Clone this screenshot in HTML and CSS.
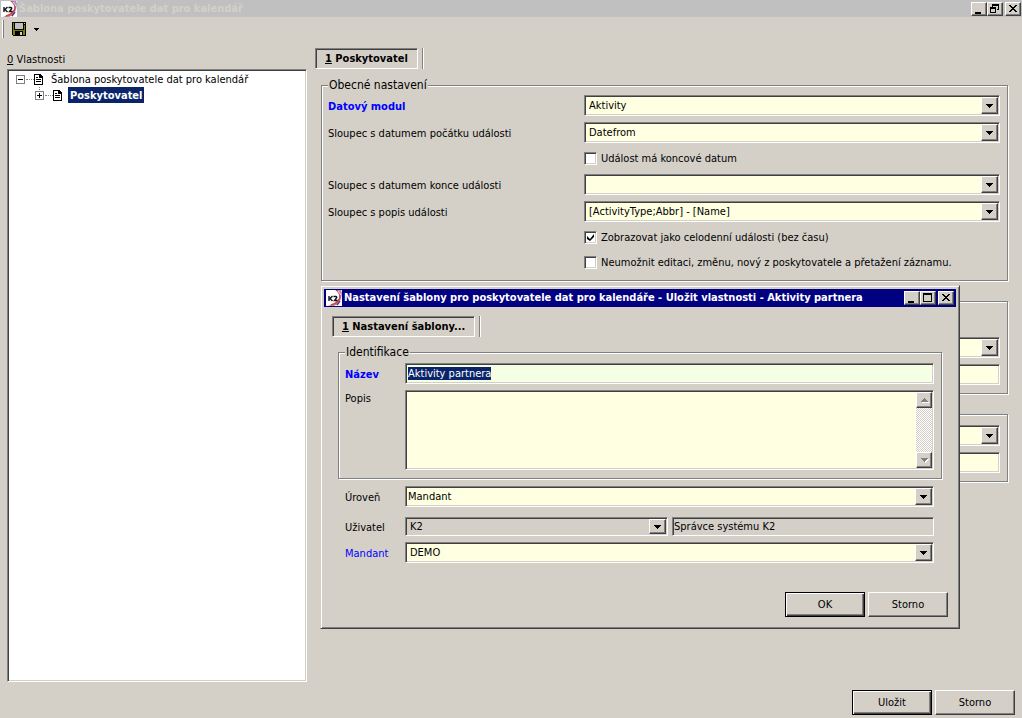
FILE: index.html
```html
<!DOCTYPE html>
<html lang="cs">
<head>
<meta charset="utf-8">
<title>Šablona poskytovatele dat pro kalendář</title>
<link rel="stylesheet" href="styles.css">
</head>
<body>
<svg class="defs" aria-hidden="true">
  <symbol id="logo" viewBox="0 0 16 16">
    <rect width="16" height="16" fill="#fff"/>
    <path d="M9 0h6l1 3-1 6-3 5-4 2H2l4-2c5-1 8-5 7-9-1-2-2-4-4-5z" fill="#b98ab8"/>
    <path d="M10 0c4 2 5 6 3 10" fill="none" stroke="#c02a3a" stroke-width="1"/>
    <path d="M13 9c-1 3-4 5-8 6" fill="none" stroke="#d8472f" stroke-width="1.500"/>
    <path d="M14 11l-3 4" fill="none" stroke="#5a3c86" stroke-width="1.500"/>
    <path d="M12 1l3 4" fill="none" stroke="#e8e0f0" stroke-width="1"/>
    <path d="M3 6v5M6.500 6L4 8.500 6.500 11M7.500 6.500h2.500c1 0 1 1.500 0 2L8.500 10.500h3" fill="none" stroke="#101018" stroke-width="1.400"/>
  </symbol>
  <symbol id="down" viewBox="0 0 7 4"><path d="M0 0h7v1H6v1H5v1H4v1H3V3H2V2H1V1H0z" fill="currentColor"/></symbol>
  <symbol id="up" viewBox="0 0 7 4"><path d="M3 0h1v1h1v1h1v1h1v1H0V3h1V2h1V1h1z" fill="currentColor"/></symbol>
  <symbol id="min" viewBox="0 0 12 10"><path d="M2 8h6v2H2z"/></symbol>
  <symbol id="max" viewBox="0 0 12 10"><path d="M1 0h9v9H1zM2 2v6h7V2z" fill-rule="evenodd"/></symbol>
  <symbol id="restore" viewBox="0 0 12 10"><path d="M3 0h7v6H8V5h1V2H4v1H3zM1 3h6v6H1zM2 5v3h4V5z" fill-rule="evenodd"/></symbol>
  <symbol id="close" viewBox="0 0 12 10"><path d="M2 1h2v1h1v1h2V2h1V1h2v1H9v1H8v1H7v1h1v1h1v1h1v1H8V7H7V6H5v1H4v1H2V7h1V6h1V5h1V4H4V3H3V2H2z"/></symbol>
  <symbol id="doc" viewBox="0 0 9 11"><path d="M0 0h6l3 3v8H0zM1 1v9h7V4H5V1z" fill-rule="evenodd"/><path d="M2 3h2v1H2zM2 5h5v1H2zM2 7h5v1H2z"/></symbol>
</svg>

<div class="window">
  <header class="titlebar">
    <svg class="logo"><use href="#logo"/></svg>
    <h1 class="title">Šablona poskytovatele dat pro kalendář</h1>
    <div class="winbtns">
      <button class="winbtn" aria-label="Minimalizovat"><svg><use href="#min"/></svg></button>
      <button class="winbtn" aria-label="Obnovit"><svg><use href="#restore"/></svg></button>
      <button class="winbtn winbtn-close" aria-label="Zavřít"><svg><use href="#close"/></svg></button>
    </div>
  </header>

  <div class="toolbar">
    <span class="grip"></span>
    <button class="tool" aria-label="Uložit šablonu">
      <svg class="disk" viewBox="0 0 14 14"><path d="M0 0h14v14H1L0 13z"/><path d="M1 1h1v7h10V3h1v10h-2V9H3v4H1z" fill="#808000"/><path d="M3 1h8v6H3z" fill="#c0c0c0"/><path d="M12 1h1v1h-1zM8 10h2v3H8z" fill="#d4d0c8"/></svg>
    </button>
    <button class="tool" aria-label="Možnosti uložení"><svg class="tool-arrow" viewBox="0 0 5 3"><path d="M0 0h5v1H4v1H3v1H2V2H1V1H0z"/></svg></button>
  </div>

  <main class="main">
    <section class="side">
      <h2 class="side-title"><u>0</u> Vlastnosti</h2>
      <ul class="tree">
        <li>
          <div class="node"><svg class="expander" viewBox="0 0 9 9"><path d="M0 0h9v9H0zM1 1v7h7V1z" fill="#808080" fill-rule="evenodd"/><path d="M2 4h5v1H2z"/></svg><span class="dots"></span><svg class="doc"><use href="#doc"/></svg><span class="node-text">Šablona poskytovatele dat pro kalendář</span></div>
          <ul class="subtree">
            <li>
              <div class="node"><svg class="expander branch" viewBox="0 0 9 16"><path d="M0 4h9v9H0zM1 5v7h7V5zM4 0h1v1H4zM4 2h1v1H4z" fill="#808080" fill-rule="evenodd"/><path d="M2 8h5v1H2zM4 6h1v5H4z"/></svg><span class="dots"></span><svg class="doc"><use href="#doc"/></svg><span class="node-text selected">Poskytovatel</span></div>
            </li>
          </ul>
        </li>
      </ul>
    </section>

    <section class="content">
      <div class="tabs"><button class="tab"><u>1</u> Poskytovatel</button><span class="tab-end"></span></div>

      <fieldset class="group">
        <legend>Obecné nastavení</legend>
        <div class="rows">
          <div class="row"><label class="required" for="module">Datový modul</label><div class="combo"><select id="module"><option>Aktivity</option></select><span class="drop"><svg><use href="#down"/></svg></span></div></div>
          <div class="row"><label for="start">Sloupec s datumem počátku události</label><div class="combo"><select id="start"><option>Datefrom</option></select><span class="drop"><svg><use href="#down"/></svg></span></div></div>
          <div class="row check-row"><label class="check"><input type="checkbox">Událost má koncové datum</label></div>
          <div class="row"><label for="end">Sloupec s datumem konce události</label><div class="combo"><select id="end"><option></option></select><span class="drop"><svg><use href="#down"/></svg></span></div></div>
          <div class="row"><label for="desc">Sloupec s popis události</label><div class="combo"><select id="desc"><option>[ActivityType;Abbr] - [Name]</option></select><span class="drop"><svg><use href="#down"/></svg></span></div></div>
          <div class="row check-row"><label class="check"><input type="checkbox" checked>Zobrazovat jako celodenní události (bez času)</label></div>
          <div class="row check-row"><label class="check"><input type="checkbox">Neumožnit editaci, změnu, nový z poskytovatele a přetažení záznamu.</label></div>
        </div>
      </fieldset>

      <div class="group plain tall">
        <div class="rows">
          <div class="row"><div class="combo"><select aria-label="Sloupec"><option></option></select><span class="drop"><svg><use href="#down"/></svg></span></div></div>
          <div class="row"><input class="field" aria-label="Hodnota"></div>
        </div>
      </div>
      <div class="group plain">
        <div class="rows">
          <div class="row"><div class="combo"><select aria-label="Sloupec"><option></option></select><span class="drop"><svg><use href="#down"/></svg></span></div></div>
          <div class="row"><input class="field" aria-label="Hodnota"></div>
        </div>
      </div>
    </section>
  </main>

  <footer class="actions"><button class="btn default">Uložit</button><button class="btn">Storno</button></footer>
</div>

<div class="dialog" role="dialog" aria-labelledby="dialog-title">
  <header class="titlebar active">
    <svg class="logo"><use href="#logo"/></svg>
    <h2 class="title" id="dialog-title">Nastavení šablony pro poskytovatele dat pro kalendáře - Uložit vlastnosti - Aktivity partnera</h2>
    <div class="winbtns">
      <button class="winbtn" aria-label="Minimalizovat"><svg><use href="#min"/></svg></button>
      <button class="winbtn" aria-label="Maximalizovat"><svg><use href="#max"/></svg></button>
      <button class="winbtn winbtn-close" aria-label="Zavřít"><svg><use href="#close"/></svg></button>
    </div>
  </header>
  <div class="dialog-body">
    <div class="tabs"><button class="tab"><u>1</u> Nastavení šablony...</button><span class="tab-end"></span></div>
    <fieldset class="group">
      <legend>Identifikace</legend>
      <div class="rows">
        <div class="row"><label class="required" for="name">Název</label><input class="field focused" id="name" value="Aktivity partnera"></div>
        <div class="row memo-row"><label for="note">Popis</label>
          <div class="memo"><textarea id="note"></textarea>
            <div class="scroll"><button disabled aria-label="Nahoru"><svg><use href="#up"/></svg></button><button disabled aria-label="Dolů"><svg><use href="#down"/></svg></button></div>
          </div>
        </div>
      </div>
    </fieldset>
    <div class="dialog-rows">
      <div class="row"><label for="level">Úroveň</label><div class="combo tight"><select id="level"><option>Mandant</option></select><span class="drop"><svg><use href="#down"/></svg></span></div></div>
      <div class="row user-row"><label for="user">Uživatel</label>
        <div class="pair"><div class="combo readonly"><select id="user"><option>K2</option></select><span class="drop"><svg><use href="#down"/></svg></span></div><input class="field readonly" value="Správce systému K2" aria-label="Jméno uživatele" readonly></div>
      </div>
      <div class="row"><label class="link" for="client">Mandant</label><div class="combo"><select id="client"><option>DEMO</option></select><span class="drop"><svg><use href="#down"/></svg></span></div></div>
    </div>
  </div>
  <footer class="actions"><button class="btn default">OK</button><button class="btn">Storno</button></footer>
</div>
<script src="app.js"></script>
</body>
</html>
```
FILE: styles.css
```css
:root {
  --face: #d4d0c8;
  --shadow: #808080;
  --dark: #404040;
  --light: #fff;
  --field: #ffffe1;
  --navy: #0a246a;
}

* { box-sizing: border-box; }

body {
  margin: 0;
  background: var(--face);
  color: #000;
  font: 11px/14px "DejaVu Sans Condensed", "DejaVu Sans", sans-serif;
}

button, input, select, textarea { font: inherit; color: inherit; border-radius: 0; }
svg { display: block; flex: none; shape-rendering: crispEdges; }
h1, h2, ul, fieldset { margin: 0; padding: 0; }
ul { list-style: none; }
.defs { position: absolute; width: 0; height: 0; }

.window { min-height: 100vh; display: flex; flex-direction: column; }

/* title bars */
.titlebar {
  display: flex;
  align-items: center;
  gap: 2px;
  height: 17px;
  padding: 0 1px;
  background: #c0c0c0;
  color: var(--face);
}
.titlebar.active { height: 18px; padding: 0 2px; background: #000080; color: #fff; }
.logo { width: 16px; height: 16px; shape-rendering: auto; }
.title { flex: 1; font-size: 11px; line-height: 14px; font-weight: bold; white-space: nowrap; overflow: hidden; }
.winbtns { display: flex; }
.winbtn {
  width: 16px;
  height: 14px;
  padding: 1px;
  border: 1px solid;
  border-color: var(--light) var(--dark) var(--dark) var(--light);
  box-shadow: inset -1px -1px var(--shadow);
  background: var(--face);
}
.winbtn svg { width: 12px; height: 10px; }
.winbtn-close { margin-left: 2px; }

/* toolbar */
.toolbar { display: flex; align-items: center; height: 24px; padding: 0 2px; }
.grip { width: 2px; height: 18px; border-right: 1px solid var(--shadow); border-left: 1px solid var(--light); }
.tool { border: 0; padding: 0 0 0 8px; background: none; }
.disk { width: 14px; height: 14px; }
.tool-arrow { width: 5px; height: 3px; }

/* main area */
.main { flex: 1; display: grid; grid-template-columns: 300px minmax(0, 1fr); gap: 8px; padding: 7px 7px 8px; }
.side { display: flex; flex-direction: column; padding-top: 5px; }
.side-title { font-size: 11px; line-height: 14px; font-weight: normal; margin-bottom: 2px; }
.tree {
  flex: 1;
  padding: 1px 0 0 8px;
  background: #fff;
  border: 1px solid;
  border-color: var(--shadow) var(--light) var(--light) var(--shadow);
  box-shadow: inset 1px 1px var(--dark), inset -1px -1px var(--face);
}
.subtree { padding-left: 19px; }
.node { display: flex; align-items: center; height: 16px; white-space: nowrap; }
.expander { width: 9px; height: 9px; }
.branch { height: 16px; }
.dots { width: 8px; margin-left: 1px; border-top: 1px dotted var(--shadow); }
.doc { width: 9px; height: 11px; }
.node-text { margin-left: 6px; padding: 1px 2px 0; line-height: 15px; }
.selected { background: var(--navy); color: #fff; font-weight: bold; }

/* tabs */
.tabs { display: flex; gap: 4px; height: 21px; }
.tab {
  padding: 1px 9px 0;
  border: 1px solid;
  border-color: var(--shadow) var(--light) var(--light) var(--shadow);
  box-shadow: inset 1px 1px var(--dark);
  background: var(--face);
  font-weight: bold;
  white-space: nowrap;
}
.tab-end { width: 2px; border-left: 1px solid var(--shadow); border-right: 1px solid var(--light); }

/* groups */
.content .group { margin: 9px 7px 0 6px; }
.group {
  min-width: 0;
  padding: 3px 7px 8px 6px;
  border: 1px solid var(--shadow);
  box-shadow: 1px 1px var(--light), inset 1px 1px var(--light);
}
.group legend { padding: 1px 1px 0; background: var(--face); font-size: 12px; line-height: 13px; }
.content .plain { margin-top: 20px; padding-top: 10px; }
.content .tall { padding-top: 35px; }
.rows { display: grid; gap: 6px; }
.row { display: grid; grid-template-columns: 256px minmax(0, 1fr); align-items: center; height: 21px; }
.row > label { white-space: nowrap; padding-top: 2px; }
.row > :only-child { grid-column: 2; }
.check-row { height: 19px; }
.required { color: #00f; font-weight: bold; }
.link { color: #00f; }

/* fields */
.combo, .field, .memo {
  width: 100%;
  min-width: 0;
  height: 21px;
  padding: 1px;
  border: 1px solid;
  border-color: var(--shadow) var(--light) var(--light) var(--shadow);
  box-shadow: inset 1px 1px var(--dark), inset -1px -1px var(--face);
  background: var(--field);
}
.field { outline: 0; }
.focused { padding-left: 2px; background: #f4ffe3; }
.focused::selection { background: var(--navy); color: #fff; }
.combo { display: flex; }
.combo select { flex: 1; min-width: 0; appearance: none; border: 0; padding: 0 3px; background: none; outline: 0; }
.tight select { padding: 0 1px; }
.drop {
  flex: none;
  width: 17px;
  display: grid;
  place-items: center;
  border: 1px solid;
  border-color: var(--light) var(--dark) var(--dark) var(--light);
  box-shadow: inset -1px -1px var(--shadow);
  background: var(--face);
}
.drop svg, .scroll svg { width: 7px; height: 4px; }
.combo.readonly, .field.readonly { background: var(--face); height: 19px; }

.row > .check { display: flex; align-items: center; gap: 4px; padding-top: 0; }
.check input {
  appearance: none;
  width: 13px;
  height: 13px;
  margin: 0;
  background: #fff;
  border: 1px solid;
  border-color: var(--shadow) var(--light) var(--light) var(--shadow);
  box-shadow: inset 1px 1px var(--dark), inset -1px -1px var(--face);
}
.check input:checked::before {
  content: "";
  display: block;
  width: 7px;
  height: 7px;
  margin: 2px;
  background: #000;
  clip-path: polygon(0 29%, 43% 72%, 100% 0, 100% 43%, 43% 100%, 0 72%);
}

.dialog .memo-row { height: 80px; align-items: stretch; }
.memo { display: flex; height: 80px; }
.memo textarea { flex: 1; min-width: 0; border: 0; padding: 2px; resize: none; background: none; outline: 0; }
.scroll {
  width: 16px;
  display: flex;
  flex-direction: column;
  justify-content: space-between;
  background: repeating-conic-gradient(#fff 0 25%, var(--face) 0 50%) 0 0 / 2px 2px;
}
.scroll button {
  height: 16px;
  padding: 0;
  display: grid;
  place-items: center;
  border: 1px solid;
  border-color: var(--light) var(--dark) var(--dark) var(--light);
  box-shadow: inset -1px -1px var(--shadow);
  background: var(--face);
  color: var(--shadow);
}
.scroll svg { filter: drop-shadow(1px 1px 0 #fff); }

/* buttons */
.actions { display: flex; justify-content: flex-end; gap: 3px; padding: 0 7px 3px; }
.btn {
  width: 80px;
  height: 25px;
  padding: 1px 0 0;
  border: 1px solid;
  border-color: var(--light) var(--dark) var(--dark) var(--light);
  box-shadow: inset -1px -1px var(--shadow);
  background: var(--face);
}
.btn.default {
  border-color: #000;
  box-shadow: inset 1px 1px var(--light), inset -1px -1px var(--dark), inset -2px -2px var(--shadow);
}

/* dialog window */
.dialog {
  position: absolute;
  left: 320px;
  top: 285px;
  width: 640px;
  padding: 2px;
  border: 1px solid;
  border-color: var(--face) var(--dark) var(--dark) var(--face);
  box-shadow: inset 1px 1px var(--light), inset -1px -1px var(--shadow);
  background: var(--face);
}
.dialog .titlebar { margin: 1px; }
.dialog-body { padding: 8px 15px 0 9px; }
.dialog-body .group { margin: 8px 0 0 6px; padding: 4px 7px 8px 6px; }
.dialog .row { grid-template-columns: 60px minmax(0, 1fr); }
.dialog-rows { display: grid; gap: 6px; padding: 7px 8px 0 13px; }
.dialog .user-row { height: 19px; margin-top: 4px; }
.pair { display: grid; grid-template-columns: 263px minmax(0, 1fr); gap: 4px; }
.dialog .actions { padding: 29px 9px 9px; }
```
FILE: app.js
```js
const nameField = document.getElementById("name");
nameField.focus();
nameField.select();
```
